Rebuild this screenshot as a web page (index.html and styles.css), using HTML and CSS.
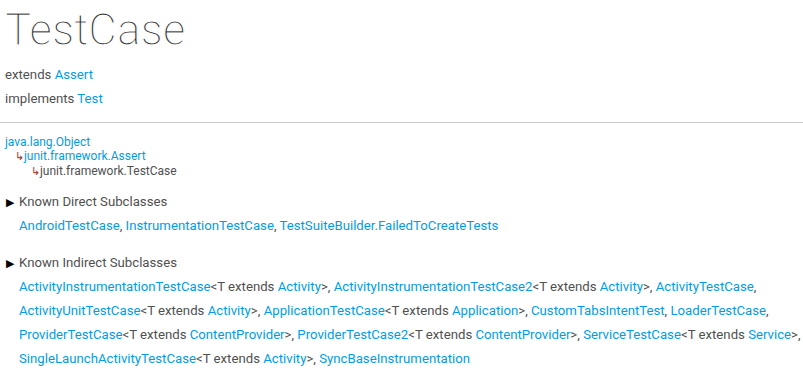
FILE: index.html
```html
<!DOCTYPE html>
<html lang="en">
<head>
  <meta charset="UTF-8">
  <title>TestCase</title>
  <meta name="viewport" content="width=device-width, initial-scale=1">
  <link rel="stylesheet" href="styles.css">
</head>
<body>

  <h1 class="api-title">TestCase</h1>

  <p class="sig">extends <a href="#">Assert</a></p>
  <p class="sig">implements <a href="#">Test</a></p>

  <hr>

  <div class="inheritance">
    <div><a href="#">java.lang.Object</a></div>
    <div class="lvl1"><span class="arrow">&#8627;</span><a href="#">junit.framework.Assert</a></div>
    <div class="lvl2"><span class="arrow">&#8627;</span>junit.framework.TestCase</div>
  </div>

  <div class="subclasses">
    <div class="toggle"><span class="tri">&#9654;</span>Known Direct Subclasses</div>
    <div class="list">
      <a href="#">AndroidTestCase</a>, <a href="#">InstrumentationTestCase</a>, <a href="#">TestSuiteBuilder.FailedToCreateTests</a>
    </div>
  </div>

  <div class="subclasses">
    <div class="toggle"><span class="tri">&#9654;</span>Known Indirect Subclasses</div>
    <div class="list">
      <a href="#">ActivityInstrumentationTestCase</a>&lt;T extends <a href="#">Activity</a>&gt;, <a href="#">ActivityInstrumentationTestCase2</a>&lt;T extends <a href="#">Activity</a>&gt;, <a href="#">ActivityTestCase</a>,<br>
      <a href="#">ActivityUnitTestCase</a>&lt;T extends <a href="#">Activity</a>&gt;, <a href="#">ApplicationTestCase</a>&lt;T extends <a href="#">Application</a>&gt;, <a href="#">CustomTabsIntentTest</a>, <a href="#">LoaderTestCase</a>,<br>
      <a href="#">ProviderTestCase</a>&lt;T extends <a href="#">ContentProvider</a>&gt;, <a href="#">ProviderTestCase2</a>&lt;T extends <a href="#">ContentProvider</a>&gt;, <a href="#">ServiceTestCase</a>&lt;T extends <a href="#">Service</a>&gt;,<br>
      <a href="#">SingleLaunchActivityTestCase</a>&lt;T extends <a href="#">Activity</a>&gt;, <a href="#">SyncBaseInstrumentation</a>
    </div>
  </div>

</body>
</html>
```

FILE: styles.css
```css
body {
  font-family: Roboto, "Liberation Sans", sans-serif;
  font-size: 13.2px;
  color: #505050;
  margin: 0;
  padding: 0 0 0 5px;
  background-color: #fff;
}

a {
  color: #039be5;
  text-decoration: none;
}

.api-title {
  font-family: "Roboto Light", Roboto, sans-serif;
  font-weight: 300;
  font-size: 44px;
  color: #333;
  -webkit-text-stroke: 1.2px #fff;
  paint-order: fill stroke;
  margin: 0;
  padding-top: 3px;
  line-height: 54px;
}

.sig {
  margin: 0;
  line-height: 24px;
}

.sig:first-of-type {
  margin-top: 6px;
}

hr {
  border: none;
  border-top: 1px solid #ccc;
  margin: 11px 0 12px -5px;
}

.inheritance {
  font-size: 12px;
  line-height: 14px;
}

.inheritance .lvl1 {
  padding-left: 10px;
}

.inheritance .lvl2 {
  padding-left: 26px;
}

.arrow {
  color: #a03020;
  font-size: 11px;
}

.subclasses {
  margin-top: 11px;
}

.subclasses + .subclasses {
  margin-top: 13px;
}

.toggle {
  line-height: 24px;
  position: relative;
  padding-left: 14px;
}

.tri {
  color: #000;
  font-size: 11px;
  position: absolute;
  left: 1px;
  top: 1px;
}

.list {
  padding-left: 14px;
  line-height: 24px;
}
```
